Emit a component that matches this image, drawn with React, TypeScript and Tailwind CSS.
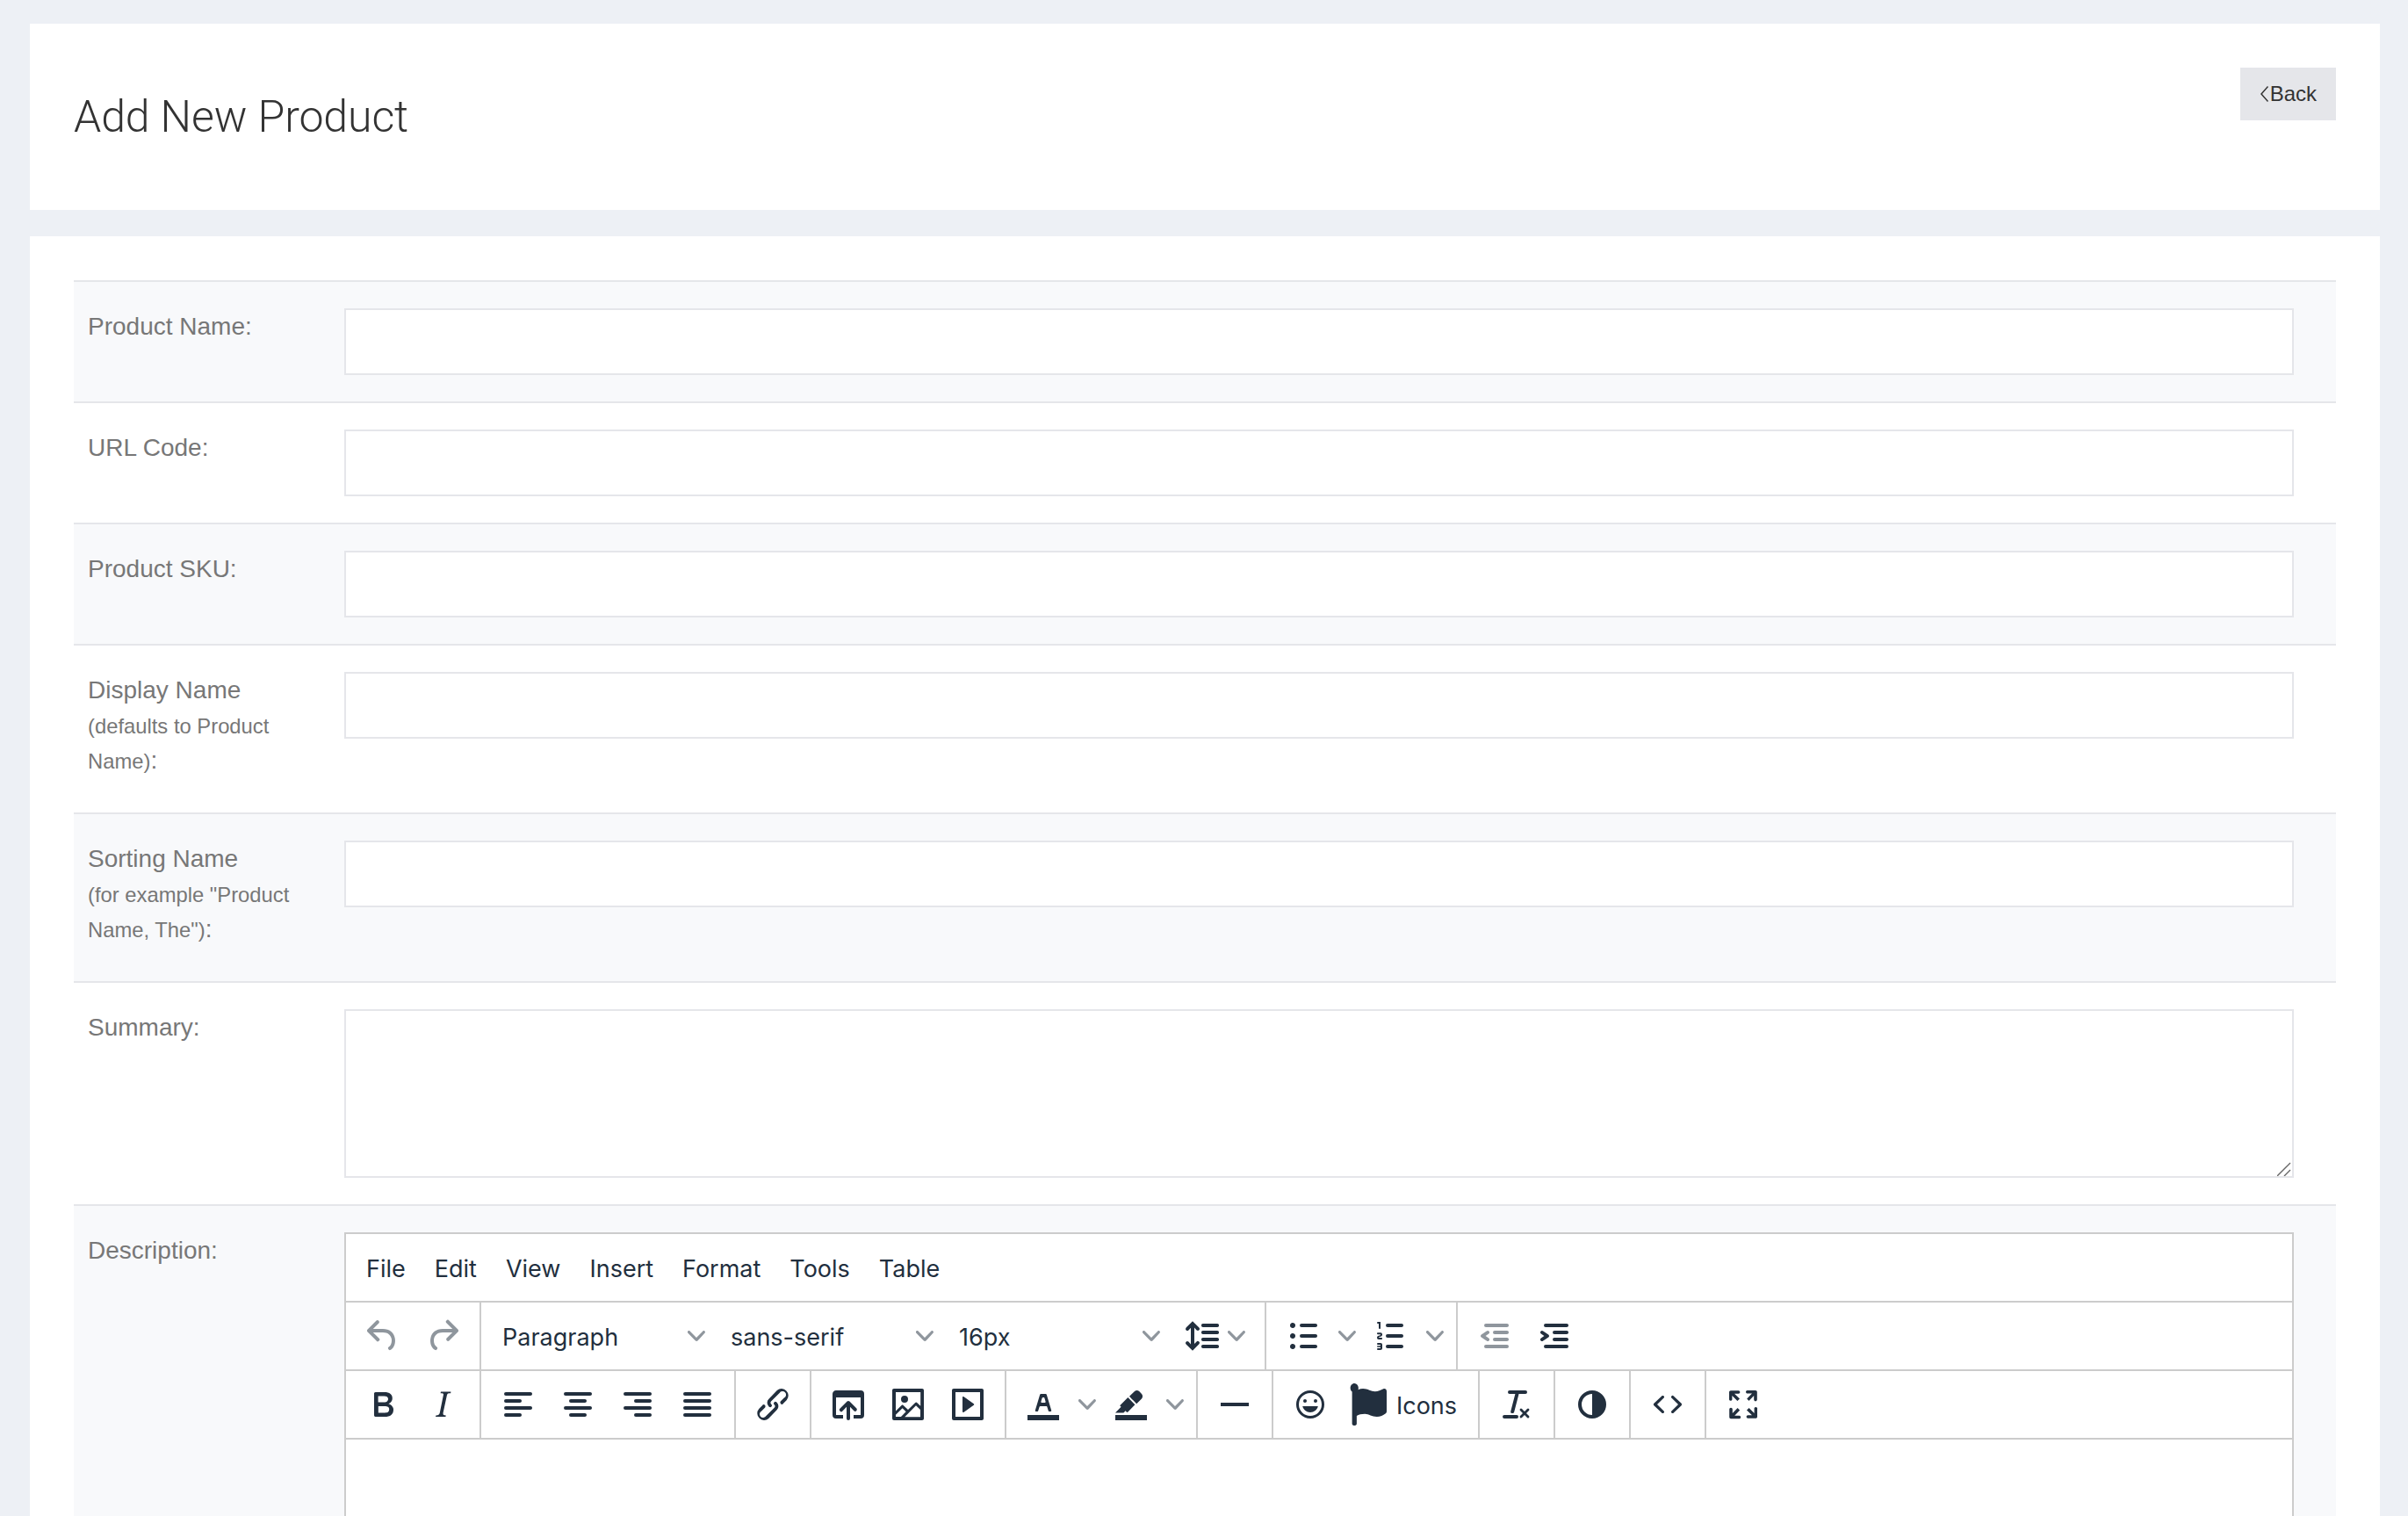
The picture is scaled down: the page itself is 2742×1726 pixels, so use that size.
const D = "text-[#222f3e]"

const paths: Record<string, string> = {
  undo: "M6.4 8H12c3.7 0 6.2 2 6.8 5.1.6 2.7-.4 5.6-2.3 6.8a1 1 0 0 1-1-1.8c1.1-.6 1.8-2.7 1.4-4.6-.5-2.1-2.1-3.5-4.9-3.5H6.4l3.3 3.3a1 1 0 1 1-1.4 1.4l-5-5a1 1 0 0 1 0-1.4l5-5a1 1 0 0 1 1.4 1.4L6.4 8z",
  redo: "M17.6 10H12c-2.8 0-4.4 1.4-4.9 3.5-.4 2 .3 4 1.4 4.6a1 1 0 1 1-1 1.8c-2-1.2-2.9-4.1-2.3-6.8.6-3 3-5.1 6.8-5.1h5.6l-3.3-3.3a1 1 0 1 1 1.4-1.4l5 5a1 1 0 0 1 0 1.4l-5 5a1 1 0 0 1-1.4-1.4l3.3-3.3z",
  bold: "M7.8 19c-.3 0-.5 0-.6-.2l-.2-.5V5.7c0-.2 0-.4.2-.5l.6-.2h5c1.5 0 2.7.3 3.5 1 .7.6 1.1 1.4 1.1 2.5a3 3 0 0 1-.6 1.9c-.4.6-1 1-1.6 1.2.4.1.9.3 1.3.6s.8.7 1 1.2c.4.4.5 1 .5 1.6 0 1.3-.4 2.3-1.3 3-.8.7-2.1 1-3.8 1H7.8zm5-8.3c.6 0 1.2-.1 1.6-.5.4-.3.6-.7.6-1.3 0-1.1-.8-1.7-2.3-1.7H9.3v3.5h3.4zm.5 6c.7 0 1.3-.1 1.7-.4.4-.4.6-.9.6-1.5s-.2-1-.7-1.4c-.4-.3-1-.4-2-.4H9.4v3.8h4z",
  italic: "M16.7 4.7l-.1.9h-.3c-.6 0-1 0-1.4.3-.3.3-.4.6-.5 1.1l-2.1 9.8v.6c0 .5.4.8 1.4.8h.2l-.2.8H8l.2-.8h.2c1.1 0 1.8-.5 2-1.5l2-9.8.1-.5c0-.6-.4-.8-1.4-.8h-.3l.2-.9h5.8z",
  alignLeft: "M5 5h14c.6 0 1 .4 1 1s-.4 1-1 1H5a1 1 0 1 1 0-2zm0 4h8c.6 0 1 .4 1 1s-.4 1-1 1H5a1 1 0 1 1 0-2zm0 8h8c.6 0 1 .4 1 1s-.4 1-1 1H5a1 1 0 0 1 0-2zm0-4h14c.6 0 1 .4 1 1s-.4 1-1 1H5a1 1 0 0 1 0-2z",
  alignCenter: "M5 5h14c.6 0 1 .4 1 1s-.4 1-1 1H5a1 1 0 1 1 0-2zm3 4h8c.6 0 1 .4 1 1s-.4 1-1 1H8a1 1 0 1 1 0-2zm0 8h8c.6 0 1 .4 1 1s-.4 1-1 1H8a1 1 0 0 1 0-2zm-3-4h14c.6 0 1 .4 1 1s-.4 1-1 1H5a1 1 0 0 1 0-2z",
  alignRight: "M5 5h14c.6 0 1 .4 1 1s-.4 1-1 1H5a1 1 0 1 1 0-2zm6 4h8c.6 0 1 .4 1 1s-.4 1-1 1h-8a1 1 0 0 1 0-2zm0 8h8c.6 0 1 .4 1 1s-.4 1-1 1h-8a1 1 0 0 1 0-2zm-6-4h14c.6 0 1 .4 1 1s-.4 1-1 1H5a1 1 0 0 1 0-2z",
  justify: "M5 5h14c.6 0 1 .4 1 1s-.4 1-1 1H5a1 1 0 1 1 0-2zm0 4h14c.6 0 1 .4 1 1s-.4 1-1 1H5a1 1 0 1 1 0-2zm0 4h14c.6 0 1 .4 1 1s-.4 1-1 1H5a1 1 0 0 1 0-2zm0 4h14c.6 0 1 .4 1 1s-.4 1-1 1H5a1 1 0 0 1 0-2z",
  link: "M6.2 12.3a1 1 0 0 1 1.4 1.4l-2 2a2 2 0 1 0 2.6 2.8l4.8-4.8a1 1 0 0 0 0-1.4 1 1 0 1 1 1.4-1.3 2.9 2.9 0 0 1 0 4L9.6 20a3.9 3.9 0 0 1-5.5-5.5l2-2zm11.6-.6a1 1 0 0 1-1.4-1.4l2-2a2 2 0 1 0-2.6-2.8L11 10.3a1 1 0 0 0 0 1.4A1 1 0 1 1 9.6 13a2.9 2.9 0 0 1 0-4L14.4 4a3.9 3.9 0 0 1 5.5 5.5l-2 2z",
  browse: "M19 4a2 2 0 0 1 2 2v12a2 2 0 0 1-2 2h-4v-2h4V8H5v10h4v2H5a2 2 0 0 1-2-2V6c0-1.1.9-2 2-2h14zm-8 9.4l-2.3 2.3a1 1 0 1 1-1.4-1.4l4-4a1 1 0 0 1 1.4 0l4 4a1 1 0 0 1-1.4 1.4L13 13.4V20a1 1 0 0 1-2 0v-6.6z",
  image: "M5 15.7l3.3-3.2c.3-.3.7-.3 1 0L12 15l4.1-4c.3-.4.8-.4 1 0l2 1.9V5H5v10.7zM5 18V19h3l2.8-2.9-2-2L5 17.9zm14-3l-2.5-2.4-6.4 6.5H19v-4zM4 3h16c.6 0 1 .4 1 1v16c0 .6-.4 1-1 1H4a1 1 0 0 1-1-1V4c0-.6.4-1 1-1zm6 8a2 2 0 1 0 0-4 2 2 0 0 0 0 4z",
  embed: "M4 3h16c.6 0 1 .4 1 1v16c0 .6-.4 1-1 1H4a1 1 0 0 1-1-1V4c0-.6.4-1 1-1zm1 2v14h14V5H5zm4.8 2.6l5.6 4a.5.5 0 0 1 0 .8l-5.6 4A.5.5 0 0 1 9 16V8a.5.5 0 0 1 .8-.4z",
  textColor: "M3 18h18v3H3zM8.7 16h-.8a.5.5 0 0 1-.5-.6l2.7-9c.1-.3.3-.4.5-.4h2.8c.2 0 .4.1.5.4l2.7 9a.5.5 0 0 1-.5.6h-.8a.5.5 0 0 1-.4-.4l-.7-2.2c0-.3-.3-.4-.5-.4h-3.4c-.2 0-.4.1-.5.4l-.7 2.2c0 .3-.2.4-.4.4zm2.6-7.6l-.6 2a.5.5 0 0 0 .5.6h1.6a.5.5 0 0 0 .5-.6l-.6-2c0-.3-.3-.4-.5-.4h-.4c-.2 0-.4.1-.5.4z",
  highlight: "M3 18h18v3H3zM7.7 16.7H3l3.3-3.3-.7-.8L10.2 8l4 4.1-4 4.2c-.2.2-.6.2-.8 0l-.6-.7-1.1 1.1zm5-7.5L11 7.4l3-2.9a2 2 0 0 1 2.6 0L18 6c.7.7.7 2 0 2.7l-2.9 2.9-1.8-1.8-.5-.6",
  hr: "M4 11h16v2H4z",
  emoji: "M9 11c.6 0 1-.4 1-1s-.4-1-1-1a1 1 0 0 0-1 1c0 .6.4 1 1 1zm6 0c.6 0 1-.4 1-1s-.4-1-1-1a1 1 0 0 0-1 1c0 .6.4 1 1 1zm-3 5.5c2.1 0 4-1.5 4.4-3.5H7.6c.5 2 2.3 3.5 4.4 3.5zM12 4a8 8 0 1 0 0 16 8 8 0 0 0 0-16zm0 14.5a6.5 6.5 0 1 1 0-13 6.5 6.5 0 0 1 0 13z",
  clear: "M13.2 6a1 1 0 0 1 0 .2l-2.6 10a1 1 0 0 1-1 .8h-.2a.8.8 0 0 1-.8-1l2.6-10H8a1 1 0 1 1 0-2h9a1 1 0 0 1 0 2h-3.8zM5 18h7a1 1 0 0 1 0 2H5a1 1 0 0 1 0-2zm13 1.5L16.5 18 15 19.5a.7.7 0 0 1-1-1l1.5-1.5-1.5-1.5a.7.7 0 0 1 1-1l1.5 1.5 1.5-1.5a.7.7 0 0 1 1 1L17.5 17l1.5 1.5a.7.7 0 0 1-1 1z",
  contrast: "M12 4a8 8 0 1 0 0 16 8 8 0 0 0 0-16zm-6 8a6 6 0 0 1 6-6v12a6 6 0 0 1-6-6z",
  code: "M9.8 15.7c.3.3.3.8 0 1-.3.4-.9.4-1.2 0l-4.4-4.1a.8.8 0 0 1 0-1.2l4.4-4.2c.3-.3.9-.3 1.2 0 .3.3.3.8 0 1.1L6 12l3.8 3.7zM14.2 15.7c-.3.3-.3.8 0 1 .4.4.9.4 1.2 0l4.4-4.1c.3-.3.3-.9 0-1.2l-4.4-4.2a.8.8 0 0 0-1.2 0c-.3.3-.3.8 0 1.1L18 12l-3.8 3.7z",
  fullscreen: "M15.3 10l-1.2-1.3 2.9-3h-2.3a.9.9 0 1 1 0-1.7H19c.5 0 .9.4.9.9v4.4a.9.9 0 1 1-1.8 0V7l-2.9 3zm0 4l3 3v-2.3a.9.9 0 1 1 1.7 0V19c0 .5-.4.9-.9.9h-4.4a.9.9 0 1 1 0-1.8H17l-3-2.9 1.3-1.2zM10 15.4l-2.9 3h2.3a.9.9 0 1 1 0 1.7H5a.9.9 0 0 1-.9-.9v-4.4a.9.9 0 1 1 1.8 0V17l2.9-3 1.2 1.3zM8.7 10L5.7 7v2.3a.9.9 0 0 1-1.7 0V5c0-.5.4-.9.9-.9h4.4a.9.9 0 0 1 0 1.8H7l3 2.9-1.3 1.2z",
  lineHeight: "M21 5a1 1 0 0 1 .1 2H13a1 1 0 0 1-.1-2H21zm0 4a1 1 0 0 1 .1 2H13a1 1 0 0 1-.1-2H21zm0 4a1 1 0 0 1 .1 2H13a1 1 0 0 1-.1-2H21zm0 4a1 1 0 0 1 .1 2H13a1 1 0 0 1-.1-2H21zM7 3.6l3.7 3.7a1 1 0 0 1-1.3 1.5h-.1L8 7.3v9.2l1.3-1.3a1 1 0 0 1 1.3 0h.1c.4.4.4 1 0 1.3v.1L7 20.4l-3.7-3.7a1 1 0 0 1 1.3-1.5h.1L6 16.7V7.4L4.7 8.7a1 1 0 0 1-1.3 0h-.1a1 1 0 0 1 0-1.3v-.1L7 3.6z",
  bullets: "M11 5h8c.6 0 1 .4 1 1s-.4 1-1 1h-8a1 1 0 0 1 0-2zm0 6h8c.6 0 1 .4 1 1s-.4 1-1 1h-8a1 1 0 0 1 0-2zm0 6h8c.6 0 1 .4 1 1s-.4 1-1 1h-8a1 1 0 0 1 0-2zM4.5 6c0-.4.1-.8.4-1 .3-.4.7-.5 1.1-.5.4 0 .8.1 1 .4.4.3.5.7.5 1.1 0 .4-.1.8-.4 1-.3.4-.7.5-1.1.5-.4 0-.8-.1-1-.4-.4-.3-.5-.7-.5-1.1zm0 6c0-.4.1-.8.4-1 .3-.4.7-.5 1.1-.5.4 0 .8.1 1 .4.4.3.5.7.5 1.1 0 .4-.1.8-.4 1-.3.4-.7.5-1.1.5-.4 0-.8-.1-1-.4-.4-.3-.5-.7-.5-1.1zm0 6c0-.4.1-.8.4-1 .3-.4.7-.5 1.1-.5.4 0 .8.1 1 .4.4.3.5.7.5 1.1 0 .4-.1.8-.4 1-.3.4-.7.5-1.1.5-.4 0-.8-.1-1-.4-.4-.3-.5-.7-.5-1.1z",
  numbers: "M10 17h8c.6 0 1 .4 1 1s-.4 1-1 1h-8a1 1 0 0 1 0-2zm0-6h8c.6 0 1 .4 1 1s-.4 1-1 1h-8a1 1 0 0 1 0-2zm0-6h8c.6 0 1 .4 1 1s-.4 1-1 1h-8a1 1 0 1 1 0-2zM6 4v3.5c0 .3-.2.5-.5.5a.5.5 0 0 1-.5-.5V5h-.5a.5.5 0 0 1 0-1H6zm-1 8.8l.2.2h1.3c.3 0 .5.2.5.5s-.2.5-.5.5H4.9a1 1 0 0 1-.9-1V13c0-.4.3-.8.6-1l1.2-.4.2-.3a.2.2 0 0 0-.2-.2H4.5a.5.5 0 0 1-.5-.5c0-.3.2-.5.5-.5h1.6c.5 0 .9.4.9 1v.1c0 .4-.3.8-.6 1l-1.2.4-.2.3zM7 17v2c0 .6-.4 1-1 1H4.5a.5.5 0 0 1 0-1h1.2c.2 0 .3-.1.3-.3 0-.2-.1-.3-.3-.3H4.4a.4.4 0 1 1 0-.8h1.3c.2 0 .3-.1.3-.3 0-.2-.1-.3-.3-.3H4.5a.5.5 0 1 1 0-1H6c.6 0 1 .4 1 1z",
  outdent: "M7 5h12c.6 0 1 .4 1 1s-.4 1-1 1H7a1 1 0 1 1 0-2zm5 4h7c.6 0 1 .4 1 1s-.4 1-1 1h-7a1 1 0 0 1 0-2zm0 4h7c.6 0 1 .4 1 1s-.4 1-1 1h-7a1 1 0 0 1 0-2zm-5 4h12a1 1 0 0 1 0 2H7a1 1 0 0 1 0-2zm1.6-3.8a1 1 0 0 1-1.2 1.6l-3-2a1 1 0 0 1 0-1.6l3-2a1 1 0 0 1 1.2 1.6L6.8 12l1.8 1.2z",
  indent: "M7 5h12c.6 0 1 .4 1 1s-.4 1-1 1H7a1 1 0 1 1 0-2zm5 4h7c.6 0 1 .4 1 1s-.4 1-1 1h-7a1 1 0 0 1 0-2zm0 4h7c.6 0 1 .4 1 1s-.4 1-1 1h-7a1 1 0 0 1 0-2zm-5 4h12a1 1 0 0 1 0 2H7a1 1 0 0 1 0-2zm-2.6-3.8L6.2 12l-1.8-1.2a1 1 0 0 1 1.2-1.6l3 2a1 1 0 0 1 0 1.6l-3 2a1 1 0 1 1-1.2-1.6z",
}

function Chevron() {
  return (
    <svg viewBox="0 0 10 10" className="w-5 h-5 fill-[#222f3e] opacity-50 shrink-0">
      <path d="M8.7 2.2c.3-.3.8-.3 1 0 .4.4.4.9 0 1.2L5.7 7.8c-.3.3-.9.3-1.2 0L.2 3.4a.8.8 0 0 1 0-1.2c.3-.3.8-.3 1.1 0L5 6l3.7-3.8z" />
    </svg>
  )
}

function Icon({ name, disabled }: { name: string; disabled?: boolean }) {
  return (
    <svg viewBox="0 0 24 24" className={`w-12 h-12 fill-[#222f3e] shrink-0 ${disabled ? "opacity-50" : ""}`}>
      <path fillRule="evenodd" d={paths[name]} />
    </svg>
  )
}

function Btn({ name, disabled }: { name: string; disabled?: boolean }) {
  return (
    <div className="w-[68px] h-[68px] flex items-center justify-center">
      <Icon name={name} disabled={disabled} />
    </div>
  )
}

function Split({ name }: { name: string }) {
  return (
    <div className="flex items-center">
      <Btn name={name} />
      <div className="w-8 h-[68px] flex items-center justify-center">
        <Chevron />
      </div>
    </div>
  )
}

function Select({ label, width }: { label: string; width: string }) {
  return (
    <div className={`${width} h-[68px] flex items-center justify-between pl-4 pr-[13px]`}>
      <span className="pt-[2px]">{label}</span>
      <Chevron />
    </div>
  )
}

function Group({ children, last }: { children: React.ReactNode; last?: boolean }) {
  return (
    <div className={`flex items-center px-2 border-[#cccccc] ${last ? "" : "border-r-2"}`}>{children}</div>
  )
}

function Editor() {
  return (
    <div className={`h-[600px] border-2 border-[#cccccc] bg-white text-[27px] leading-none ${D}`} style={{ fontFamily: "Inter, sans-serif" }}>
      <div className="h-[78px] flex items-center gap-[33px] pl-[23px] pt-[2px] border-b-2 border-[#cccccc]">
        {["File", "Edit", "View", "Insert", "Format", "Tools", "Table"].map((m) => (
          <span key={m}>{m}</span>
        ))}
      </div>
      <div className="h-[78px] flex items-stretch border-b-2 border-[#cccccc]">
        <Group>
          <Btn name="undo" disabled />
          <Btn name="redo" disabled />
        </Group>
        <Group>
          <Select label="Paragraph" width="w-[260px]" />
          <Select label="sans-serif" width="w-[260px]" />
          <Select label="16px" width="w-[258px]" />
          <div className="flex items-center w-[98px] h-[68px] pl-[10px]">
            <Icon name="lineHeight" />
            <span className="ml-[6px]">
              <Chevron />
            </span>
          </div>
        </Group>
        <Group>
          <Split name="bullets" />
          <Split name="numbers" />
        </Group>
        <Group last>
          <Btn name="outdent" disabled />
          <Btn name="indent" />
        </Group>
      </div>
      <div className="h-[78px] flex items-stretch border-b-2 border-[#cccccc]">
        <Group>
          <Btn name="bold" />
          <Btn name="italic" />
        </Group>
        <Group>
          <Btn name="alignLeft" />
          <Btn name="alignCenter" />
          <Btn name="alignRight" />
          <Btn name="justify" />
        </Group>
        <Group>
          <Btn name="link" />
        </Group>
        <Group>
          <Btn name="browse" />
          <Btn name="image" />
          <Btn name="embed" />
        </Group>
        <Group>
          <Split name="textColor" />
          <Split name="highlight" />
        </Group>
        <Group>
          <Btn name="hr" />
        </Group>
        <Group>
          <Btn name="emoji" />
          <div className="w-[149px] h-[68px] flex items-center pl-[11px]">
            <svg viewBox="0 0 512 512" preserveAspectRatio="none" className="w-[42px] h-12 fill-[#222f3e] shrink-0">
              <path d="M349.565 98.783C295.978 98.783 251.721 64 184.348 64c-24.955 0-47.309 4.384-68.045 12.013a55.947 55.947 0 0 0 3.586-23.562C118.117 24.015 94.806 1.206 66.338.048 34.345-1.254 8 24.296 8 56c0 19.026 9.497 35.825 24 45.945V488c0 13.255 10.745 24 24 24h16c13.255 0 24-10.745 24-24v-94.4c28.311-12.064 63.582-22.122 114.435-22.122 53.588 0 97.844 34.783 165.217 34.783 48.169 0 86.667-16.294 122.505-40.858C506.84 359.452 512 349.571 512 339.045v-243.1c0-23.393-24.269-38.87-45.485-29.016-34.338 15.948-76.454 31.854-116.95 31.854z" />
            </svg>
            <span className="ml-[11px] pt-[2px]">Icons</span>
          </div>
        </Group>
        <Group>
          <Btn name="clear" />
        </Group>
        <Group>
          <Btn name="contrast" />
        </Group>
        <Group>
          <Btn name="code" />
        </Group>
        <Group last>
          <Btn name="fullscreen" />
        </Group>
      </div>
    </div>
  )
}

function Row({ label, hint, shaded, children }: { label: string; hint?: string; shaded?: boolean; children: React.ReactNode }) {
  return (
    <div className={`flex border-t-2 border-[#e5e6ea] pr-[48px] ${shaded ? "bg-[#f8f9fb]" : "bg-white"}`}>
      <div className="w-[308px] shrink-0 pl-4 pr-8 pt-[31px] pb-[39px] text-[28px] leading-[40px] text-[#777777]">
        {label}
        {hint ? (
          <>
            <br />
            <span className="text-[23.8px] leading-none">{hint}</span>
          </>
        ) : null}
        :
      </div>
      <div className="flex-1 min-w-0 pt-[30px] pb-[30px]">{children}</div>
    </div>
  )
}

function TextInput() {
  return <input type="text" className="block w-full h-[76px] border-2 border-[#e5e6ea] bg-white outline-none" />
}

export default function App() {
  return (
    <div
      className="h-[1726px] overflow-hidden bg-[#edf0f5] pt-[27px] pl-[34px] pr-[32px]"
      style={{ fontFamily: '"Liberation Sans", Arial, sans-serif' }}
    >
      <div className="h-[212px] bg-white flex items-center justify-between px-[50px]">
        <h1 className="text-[50px] leading-none font-light tracking-[-0.1px] text-[#333333]" style={{ fontFamily: "Roboto, sans-serif" }}>
          Add New Product
        </h1>
        <a className="self-start mt-[50px] h-[60px] flex items-center pl-[23px] pr-[22px] bg-[#e5e6ea] text-[24px] text-[#333333]">
          <svg viewBox="0 0 9 18" className="w-[9px] h-[18px] mr-[2px] fill-none stroke-[#333333] stroke-[1.5]">
            <path d="M8.5 .5 1 9l7.5 8.5" />
          </svg>
          Back
        </a>
      </div>
      <div className="mt-[30px] bg-white px-[50px] pt-[50px] h-[1500px]">
        <Row label="Product Name" shaded>
          <TextInput />
        </Row>
        <Row label="URL Code">
          <TextInput />
        </Row>
        <Row label="Product SKU" shaded>
          <TextInput />
        </Row>
        <Row label="Display Name" hint="(defaults to Product Name)">
          <TextInput />
        </Row>
        <Row label="Sorting Name" hint={'(for example "Product Name, The")'} shaded>
          <TextInput />
        </Row>
        <Row label="Summary">
          <div className="relative">
            <textarea className="block w-full h-[192px] border-2 border-[#e5e6ea] bg-white outline-none resize-none" />
            {/* drag handle of the textarea */}
            <svg viewBox="0 0 16 16" className="absolute right-[3px] bottom-[2px] w-4 h-4 stroke-[#666666] fill-none">
              <path d="M0 16 15 1M8 16l7-7" strokeWidth="1.4" />
            </svg>
          </div>
        </Row>
        <Row label="Description" shaded>
          <Editor />
        </Row>
      </div>
    </div>
  )
}
